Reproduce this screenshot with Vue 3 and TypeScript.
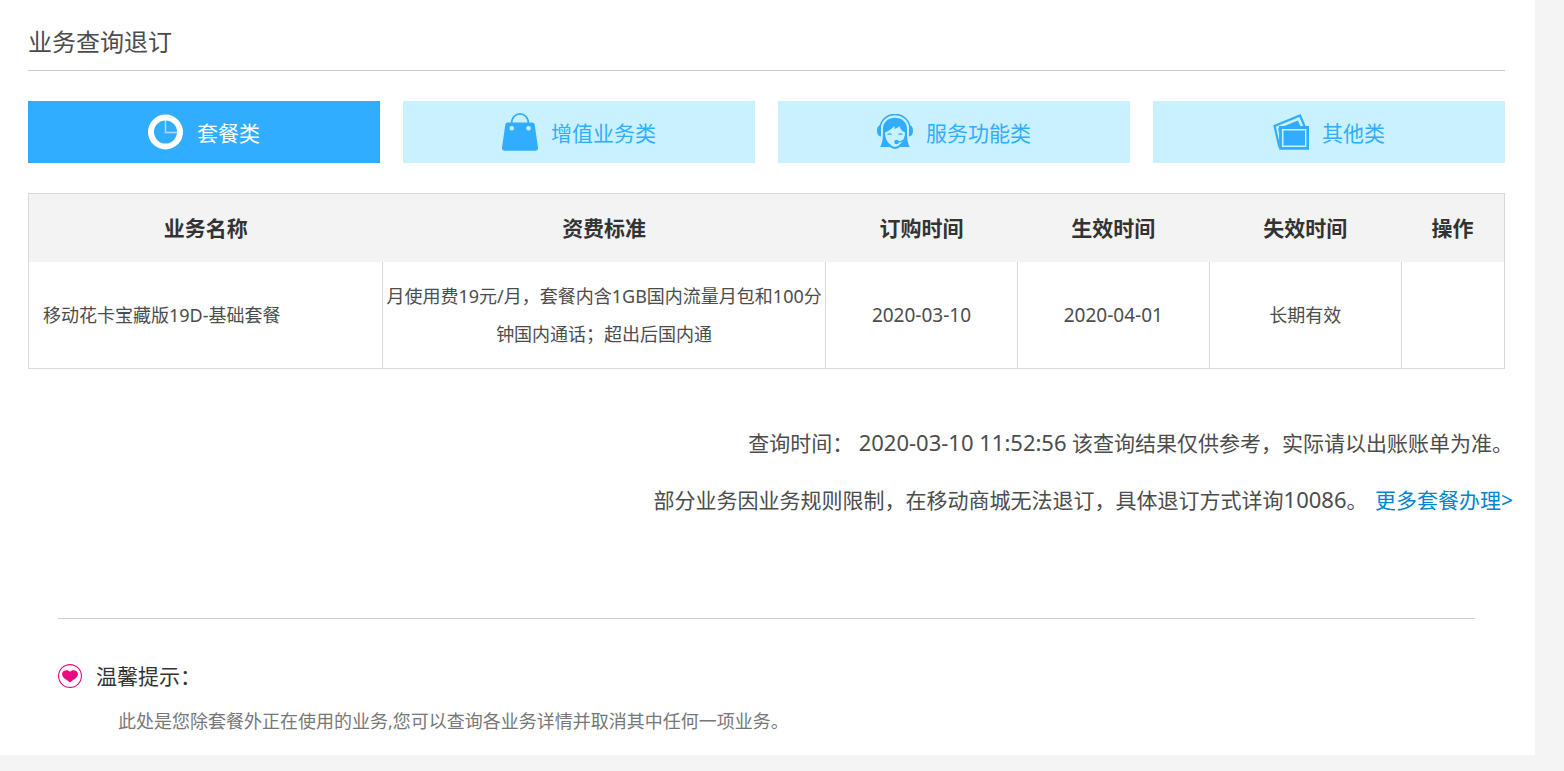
<script setup lang="ts">
import { ref } from 'vue'

interface Category {
  id: string
  label: string
}

interface Service {
  name: string
  fee: string
  ordered: string
  effective: string
  expires: string
}

const categories: Category[] = [
  { id: 'package', label: '套餐类' },
  { id: 'value', label: '增值业务类' },
  { id: 'service', label: '服务功能类' },
  { id: 'other', label: '其他类' },
]

const active = ref('package')

const columns: string[] = ['业务名称', '资费标准', '订购时间', '生效时间', '失效时间', '操作']

const services: Service[] = [
  {
    name: '移动花卡宝藏版19D-基础套餐',
    fee: '月使用费19元/月，套餐内含1GB国内流量月包和100分钟国内通话；超出后国内通',
    ordered: '2020-03-10',
    effective: '2020-04-01',
    expires: '长期有效',
  },
]
</script>

<template>
  <main class="panel">
    <h1 class="title">业务查询退订</h1>

    <nav class="tabs">
      <button
        v-for="c in categories"
        :key="c.id"
        type="button"
        class="tab"
        :class="{ active: active === c.id }"
        @click="active = c.id"
      >
        <svg v-if="c.id === 'package'" class="icon" viewBox="0 0 36 36" aria-hidden="true">
          <circle cx="17.500" cy="18" r="14.500" fill="none" stroke="currentColor" stroke-width="6" />
          <path d="M17.500 5v13.500h13" fill="none" stroke="currentColor" stroke-width="1.400" opacity=".6" />
        </svg>
        <svg v-else-if="c.id === 'value'" class="icon bag" viewBox="0 0 36 38" aria-hidden="true">
          <path d="M9.500 11C9.500 -2.500 26.500 -2.500 26.500 11" fill="none" stroke="currentColor" stroke-width="1.600" />
          <path
            fill="currentColor"
            fill-rule="evenodd"
            d="M6 9.500h24c1.500 0 2.500.8 2.700 2.300L36 34.500c.2 2-.8 3.200-2.700 3.200H2.700C.8 37.700-.2 36.500 0 34.500l3.300-22.700C3.500 10.300 4.500 9.500 6 9.500zM9.700 13a2.300 2.300 0 1 0 0 4.600 2.300 2.300 0 0 0 0-4.600zm16.800 0a2.300 2.300 0 1 0 0 4.600 2.300 2.300 0 0 0 0-4.600z"
          />
        </svg>
        <svg v-else-if="c.id === 'service'" class="icon" viewBox="0 0 36 36" aria-hidden="true">
          <path d="M3 13C6-3.800 30-3.800 33 13" fill="none" stroke="currentColor" stroke-width="1.500" />
          <path
            fill="currentColor"
            d="M4 11v11.500c-2.500 0-4-2-4-5.700S1.500 11 4 11zM32 11v11.500c2.500 0 4-2 4-5.700S34.500 11 32 11z"
          />
          <path
            fill="currentColor"
            d="M6 15C6 0 30 0 30 15c0 7 0 13 2.800 18h-8.500c-1.500 0-2-1-1.500-2.500 3.700-3 5.200-7 5.200-12-2.500-.8-4.500-3-5.500-6.200-1.500 1.200-3.500 2.400-5.500 2.500.5-1 .8-2 .7-3C14.500 14.800 12 17.300 8 18.500c0 5 1.700 9.300 5.200 12 .5 1.500 0 2.500-1.500 2.500H3.200C6 28 6 22 6 15z"
          />
          <path
            d="M10.500 20.500q2-1.200 4 0M21.500 20.500q2-1.200 4 0M28.500 22c0 3-3 6-8 6.200"
            fill="none"
            stroke="currentColor"
            stroke-width="1.300"
          />
          <circle cx="19.500" cy="28" r="2.300" fill="currentColor" />
          <path d="M12 30.500c3 4.500 9 4.500 12 0" fill="none" stroke="currentColor" stroke-width="2" />
        </svg>
        <svg v-else class="icon" viewBox="0 0 36 36" aria-hidden="true">
          <path d="M6.500 33.500L1.500 12 27 1.500l4.500 10.500" fill="none" stroke="currentColor" stroke-width="2.200" />
          <path d="M6.500 21L5 14.500l20-8 2.500 6H6.500z" fill="currentColor" />
          <path class="mat" d="M6 12H36v23.500H6z" />
          <path d="M7.500 13.500H34.800V34.300H7.500z" fill="none" stroke="currentColor" stroke-width="2.800" />
          <path d="M10.500 16.500h21.500v15H10.500z" fill="currentColor" />
        </svg>
        <span>{{ c.label }}</span>
      </button>
    </nav>

    <table class="services">
      <colgroup>
        <col class="c-name" />
        <col class="c-fee" />
        <col class="c-date" />
        <col class="c-date" />
        <col class="c-date" />
        <col class="c-action" />
      </colgroup>
      <thead>
        <tr>
          <th v-for="col in columns" :key="col" scope="col">{{ col }}</th>
        </tr>
      </thead>
      <tbody>
        <tr v-for="s in services" :key="s.name">
          <td class="name">{{ s.name }}</td>
          <td>{{ s.fee }}</td>
          <td class="date">{{ s.ordered }}</td>
          <td class="date">{{ s.effective }}</td>
          <td>{{ s.expires }}</td>
          <td></td>
        </tr>
      </tbody>
    </table>

    <div class="notes">
      <p>查询时间： <span class="stamp">2020-03-10 11:52:56</span> 该查询结果仅供参考，实际请以出账账单为准。</p>
      <p>
        部分业务因业务规则限制，在移动商城无法退订，具体退订方式详询<span class="stamp">10086</span>。
        <a href="#">更多套餐办理&gt;</a>
      </p>
    </div>

    <section class="tips">
      <h2>
        <svg class="heart" viewBox="0 0 24 24" aria-hidden="true">
          <circle cx="12" cy="12" r="11.400" fill="none" stroke="currentColor" stroke-width="1.100" />
          <path
            fill="currentColor"
            d="M12 18.500C9 15.800 4 13.800 4 10c0-4 6-5 8-2.200C14 5 20 6 20 10c0 3.800-5 5.800-8 8.500z"
          />
        </svg>
        温馨提示：
      </h2>
      <p>此处是您除套餐外正在使用的业务,您可以查询各业务详情并取消其中任何一项业务。</p>
    </section>
  </main>
</template>

<style>
body {
  margin: 0;
  background: #f4f4f4;
}
</style>

<style scoped>
.panel {
  box-sizing: border-box;
  margin: 0 29px 16px 0;
  padding: 14px 30px 13px 28px;
  background: #fff;
  color: #4c4c4c;
  font-family: "Noto Sans", "Noto Sans CJK SC", sans-serif;
  font-size: 18px;
}

.title {
  margin: 0 0 30px;
  border-bottom: 1px solid #ccc;
  font-size: 24px;
  font-weight: 400;
  line-height: 56px;
}

.tabs {
  display: grid;
  grid-template-columns: repeat(4, 1fr);
  gap: 23px;
  margin-bottom: 30px;
}

.tab {
  display: flex;
  align-items: center;
  justify-content: center;
  gap: 13px;
  height: 62px;
  padding: 0;
  border: 0;
  background: #caf1ff;
  color: #31adff;
  font: inherit;
  font-size: 21px;
  cursor: pointer;
}

.tab.active {
  background: #31adff;
  color: #fff;
}

.icon {
  width: 36px;
  height: 36px;
}

.icon.bag {
  height: 38px;
}

.mat {
  fill: #caf1ff;
}

.active .mat {
  fill: #31adff;
}

.services {
  width: 100%;
  table-layout: fixed;
  border-collapse: collapse;
  border: 1px solid #d9d9d9;
}

.c-name {
  width: 24%;
}

.c-fee {
  width: 30%;
}

.c-date {
  width: 13%;
}

.c-action {
  width: 7%;
}

th {
  height: 68px;
  padding: 0;
  background: #f3f3f3;
  color: #333;
  font-size: 21px;
  font-weight: 700;
  line-height: 38px;
}

td {
  padding: 15px 2px;
  border: 1px solid #d9d9d9;
  border-top: 0;
  line-height: 38px;
  text-align: center;
}

td.name {
  padding-left: 14px;
  text-align: left;
}

td.date {
  font-size: 19px;
}

.notes {
  margin: 46px -8px 89px 0;
  font-size: 21px;
  line-height: 57px;
  text-align: right;
}

.notes p {
  margin: 0;
}

.stamp {
  font-size: 22px;
  line-height: 1;
}

.notes a {
  margin-left: 2px;
  color: #0085d0;
  text-decoration: none;
}

.tips {
  margin: 0 30px;
  padding-top: 37px;
  border-top: 1px solid #ccc;
}

.tips h2 {
  display: flex;
  align-items: center;
  gap: 14px;
  margin: 0;
  color: #333;
  font-size: 21px;
  font-weight: 400;
  line-height: 40px;
}

.heart {
  width: 24px;
  height: 24px;
  color: #eb0a82;
}

.tips p {
  margin: 4px 0 0;
  padding-left: 60px;
  color: #777;
  line-height: 42px;
}
</style>
